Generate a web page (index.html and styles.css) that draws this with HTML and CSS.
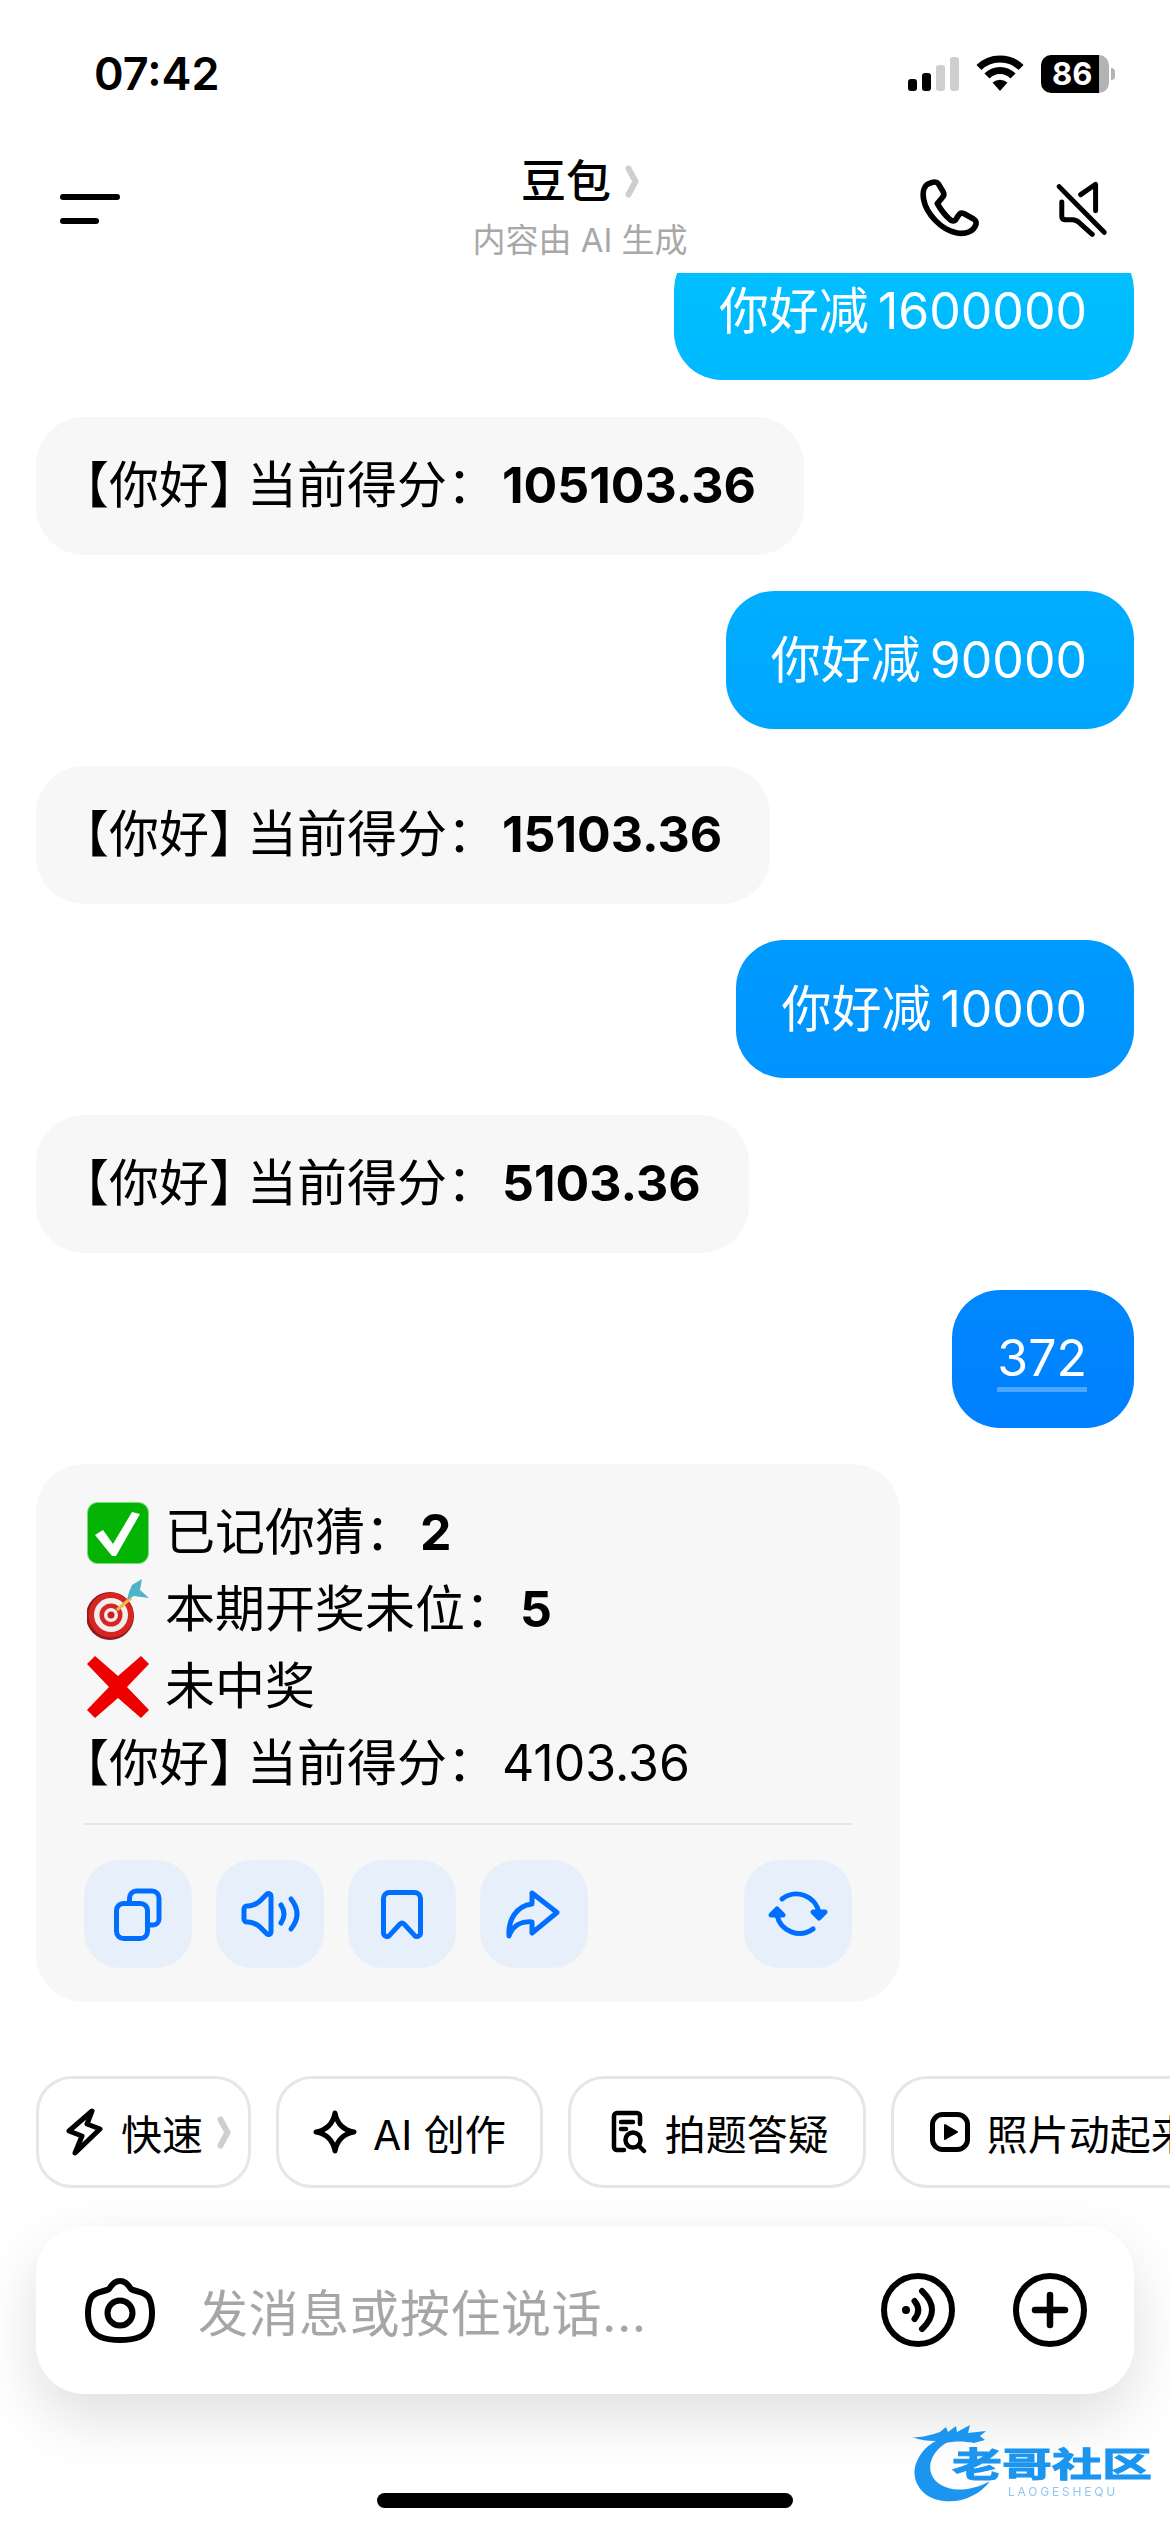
FILE: index.html
```html
<!DOCTYPE html>
<html lang="zh-CN">
<head>
    <meta charset="UTF-8">
    <meta name="viewport" content="width=device-width, initial-scale=1.0">
    <title>豆包</title>
    <link rel="stylesheet" href="styles.css">
</head>
<body>
    <div class="phone">
        <!-- Status bar -->
        <div class="status-bar">
            <span class="time">07:42</span>
            <div class="status-icons">
                <div class="signal">
                    <i class="bar on h1"></i><i class="bar on h2"></i><i class="bar h3"></i><i class="bar h4"></i>
                </div>
                <svg class="wifi" viewBox="0 0 48 36">
                    <path d="M3 12.5C14 1 34 1 45 12.5" fill="none" stroke="#000" stroke-width="7"/>
                    <path d="M11 21C18 13.5 30 13.5 37 21" fill="none" stroke="#000" stroke-width="7"/>
                    <path d="M16.5 27.5Q24 22 31.5 27.5L24 36Z" fill="#000"/>
                </svg>
                <div class="battery">
                    <div class="battery-body">86</div>
                    <i class="battery-nub"></i>
                </div>
            </div>
        </div>

        <!-- Header -->
        <header class="top-bar">
            <div class="menu-btn"><i class="menu-long"></i><i class="menu-short"></i></div>
            <div class="title-block">
                <div class="title">豆包
                    <svg class="chev" viewBox="0 0 14 33"><path d="M3.5 3.5L10.5 16.5L3.5 29.5" fill="none" stroke="#cfcfcf" stroke-width="6" stroke-linecap="round" stroke-linejoin="round"/></svg>
                </div>
                <div class="subtitle">内容由 AI 生成</div>
            </div>
            <div class="top-actions">
                <svg class="phone-icon" viewBox="110 410 190 190">
                    <path d="M145 428C125 432 120 455 124 478C132 520 175 568 222 578C250 584 275 575 282 552C284 545 280 540 272 535L245 520C238 517 232 520 228 527L220 540C215 545 208 543 200 535C185 522 175 507 165 490L178 475C185 468 187 462 183 455L168 430C162 422 155 424 145 428Z" fill="none" stroke="#000" stroke-width="17" stroke-linejoin="round"/>
                </svg>
                <svg class="mute-icon" viewBox="520 412 165 172">
                    <g fill="none" stroke="#000" stroke-width="15" stroke-linecap="round" stroke-linejoin="round">
                        <path d="M532 432L668 570"/>
                        <path d="M597 456L642 425V505"/>
                        <path d="M540 478V522Q540 532 552 532H572Q584 532 594 542L632 576"/>
                    </g>
                </svg>
            </div>
        </header>

        <!-- Chat -->
        <main class="chat">
            <div class="msg-list">
                <div class="bubble me">你好减 1600000</div>
                <div class="bubble bot"><span class="punct">【你好<span class="rb">】</span>当前得分<span class="colon">：</span></span><b>105103.36</b></div>
                <div class="bubble me">你好减 90000</div>
                <div class="bubble bot"><span class="punct">【你好<span class="rb">】</span>当前得分<span class="colon">：</span></span><b>15103.36</b></div>
                <div class="bubble me">你好减 10000</div>
                <div class="bubble bot"><span class="punct">【你好<span class="rb">】</span>当前得分<span class="colon">：</span></span><b>5103.36</b></div>
                <div class="bubble me"><span class="pending">372</span></div>

                <div class="card">
                    <div class="line">
                        <svg class="emoji" viewBox="0 0 62 62">
                            <rect x="0.5" y="0.5" width="61" height="61" rx="10" fill="#04b404" stroke="#7fd97f"/>
                            <polygon points="8,33 16,28 26,42 45,10 53,12 29,54 25,54" fill="#fff"/>
                        </svg>
                        <span>已记你猜<span class="colon">：</span><b>2</b></span>
                    </div>
                    <div class="line">
                        <svg class="emoji" viewBox="0 0 62 62">
                            <circle cx="23" cy="37" r="24" fill="#8f1b1b"/>
                            <circle cx="24" cy="36" r="22.500" fill="#d92424"/>
                            <circle cx="24" cy="36" r="17" fill="#f1eeee"/>
                            <circle cx="24" cy="36" r="11.500" fill="#d92424"/>
                            <circle cx="24" cy="36" r="7" fill="#f1eeee"/>
                            <circle cx="24" cy="36" r="3.500" fill="#c81e1e"/>
                            <path d="M30 31L44 19" stroke="#e9b949" stroke-width="3"/>
                            <path d="M40 21L47 17L62 19L53 11L55 0L45 6L42 13Z" fill="#4fb3c8"/>
                        </svg>
                        <span>本期开奖未位<span class="colon">：</span><b>5</b></span>
                    </div>
                    <div class="line">
                        <svg class="emoji" viewBox="0 0 62 62">
                            <polygon points="0,8 8,0 31,20 54,0 62,8 40,31 62,54 54,62 31,42 8,62 0,54 22,31" fill="#ee0000"/>
                        </svg>
                        <span>未中奖</span>
                    </div>
                    <div class="line"><span><span class="punct">【你好<span class="rb">】</span>当前得分<span class="colon">：</span></span>4103.36</span></div>

                    <div class="card-divider"></div>

                    <div class="card-actions">
                        <button class="act-btn">
                            <svg viewBox="0 0 108 108"><rect x="32.5" y="43.5" width="31" height="35" rx="7"/><path d="M45.5 43V38a7 7 0 0 1 7-7H68a7 7 0 0 1 7 7V59a6 6 0 0 1-6 6H64"/></svg>
                        </button>
                        <button class="act-btn">
                            <svg viewBox="0 0 108 108"><path d="M55 36a2.5 2.5 0 0 0-4-2L44 41Q38 46 32 46H31a3 3 0 0 0-3 3V59a3 3 0 0 0 3 3H32Q38 62 44 67L51 74a2.5 2.5 0 0 0 4-2Z"/><path d="M65 45Q71 54 65 63"/><path d="M75 39Q87 54 75 69"/></svg>
                        </button>
                        <button class="act-btn">
                            <svg viewBox="0 0 108 108"><path d="M35.5 38.5a6 6 0 0 1 6-6H66.500a6 6 0 0 1 6 6V73a3.500 3.500 0 0 1-6 2.400L56 64a3 3 0 0 0-4 0L41.500 75.400a3.500 3.500 0 0 1-6-2.400Z"/></svg>
                        </button>
                        <button class="act-btn">
                            <svg viewBox="0 0 108 108"><path d="M52 33L77 52.500L52 73V62C42 61 33 65 29 76C28 60 36 46 52 44Z"/></svg>
                        </button>
                        <button class="act-btn push-right">
                            <svg viewBox="0 0 108 108"><path d="M38 39A23 23 0 0 1 75 53"/><path d="M69 69A23 23 0 0 1 33 55"/><polygon class="solid" points="69,52 81,52 75,58"/><polygon class="solid" points="27,55 39,55 33,49"/></svg>
                        </button>
                    </div>
                </div>
            </div>
        </main>

        <!-- Quick chips -->
        <div class="chips">
            <div class="chip chip-first">
                <svg class="chip-icon bolt" viewBox="-2 -2 38 50"><path d="M24 2L1 22L14 27L7 44L32 20L19 15Z" fill="none" stroke="#000" stroke-width="5" stroke-linejoin="round"/></svg>
                <span>快速</span>
                <svg class="chev" viewBox="0 0 14 33"><path d="M3.500 3.500L10.500 16.500L3.500 29.500" fill="none" stroke="#cfcfcf" stroke-width="6" stroke-linecap="round" stroke-linejoin="round"/></svg>
            </div>
            <div class="chip">
                <svg class="chip-icon star" viewBox="0 0 44 44"><path d="M22 3C24 14 30 20 41 22C30 24 24 30 22 41C20 30 14 24 3 22C14 20 20 14 22 3Z" fill="none" stroke="#000" stroke-width="5" stroke-linejoin="round"/></svg>
                <span>AI 创作</span>
            </div>
            <div class="chip chip-doc">
                <svg class="chip-icon doc" viewBox="0 0 36 44"><g fill="none" stroke="#000" stroke-width="4.500" stroke-linecap="round"><path d="M13 40H6a3 3 0 0 1-3-3V6a3 3 0 0 1 3-3H26a3 3 0 0 1 3 3V14"/><path d="M10 12H22M10 19H15"/><circle cx="22" cy="30" r="7.500"/><path d="M27.500 35.500L33 41"/></g></svg>
                <span>拍题答疑</span>
            </div>
            <div class="chip chip-play">
                <svg class="chip-icon play" viewBox="0 0 40 40"><rect x="2.500" y="2.500" width="35" height="35" rx="10" fill="none" stroke="#000" stroke-width="5"/><path d="M15 13L27 20L15 27Z" fill="#000" stroke="#000" stroke-width="2" stroke-linejoin="round"/></svg>
                <span>照片动起来</span>
            </div>
        </div>

        <!-- Input bar -->
        <div class="input-bar">
            <svg class="camera" viewBox="0 0 70 65">
                <path d="M24 11C27 6 30 3 35 3C40 3 43 6 46 11C50 14 60 13 64 20C68 28 68 42 64 50C60 60 48 62 35 62C22 62 10 60 6 50C2 42 2 28 6 20C10 13 20 14 24 11Z" fill="none" stroke="#000" stroke-width="6" stroke-linejoin="round"/>
                <circle cx="35" cy="35" r="12.500" fill="none" stroke="#000" stroke-width="6"/>
            </svg>
            <div class="placeholder">发消息或按住说话...</div>
            <svg class="round-icon" viewBox="0 0 74 74">
                <circle cx="37" cy="37" r="34" fill="none" stroke="#000" stroke-width="6"/>
                <circle cx="25" cy="37" r="4" fill="#000"/>
                <path d="M33.500 28Q41 37 33.500 46M41 18Q61 37 41 56" fill="none" stroke="#000" stroke-width="6" stroke-linecap="round"/>
            </svg>
            <svg class="round-icon" viewBox="0 0 74 74">
                <circle cx="37" cy="37" r="34" fill="none" stroke="#000" stroke-width="6"/>
                <path d="M37 22V52M22 37H52" fill="none" stroke="#000" stroke-width="6.500" stroke-linecap="round"/>
            </svg>
        </div>

        <div class="home-area"><i class="home-bar"></i></div>

        <!-- Watermark -->
        <div class="watermark">
            <svg class="wm-dragon" viewBox="0 0 100 80">
                <path d="M2 14C12 15 20 12 30 9L36 4L38 9L46 3L47 9L60 2L58 10L76 8L70 13L75 17L64 20C54 18 44 18 36 20C20 30 14 48 28 60C42 70 62 68 80 58C70 72 52 80 34 78C10 76 -2 54 8 36C12 28 18 22 26 18C18 18 10 17 2 14Z" fill="#1b95f0"/>
            </svg>
            <span class="wm-name">老哥社区</span>
            <span class="wm-sub">LAOGESHEQU</span>
        </div>
    </div>
</body>
</html>
```

FILE: styles.css
```css
* {
    margin: 0;
    padding: 0;
    box-sizing: border-box;
}

body {
    background-color: #fff;
    font-family: "Inter", "Noto Sans CJK SC", sans-serif;
    color: #000;
}

.phone {
    position: relative;
    width: 1170px;
    height: 2532px;
    overflow: hidden;
    display: flex;
    flex-direction: column;
    background-color: #fff;
}

/* Status bar */
.status-bar {
    height: 100px;
    padding: 55px 55px 0 94px;
    display: flex;
    justify-content: space-between;
    align-items: flex-start;
}

.time {
    font-size: 45px;
    font-weight: 600;
    line-height: 38px;
}

.status-icons {
    display: flex;
    align-items: flex-start;
}

.signal {
    display: flex;
    align-items: flex-end;
    gap: 5px;
    height: 36px;
    margin-right: 17px;
}

.bar {
    width: 9px;
    border-radius: 3px;
    background-color: #cfcfcf;
}

.bar.on {
    background-color: #000;
}

.h1 { height: 12px; }
.h2 { height: 18px; }
.h3 { height: 26px; }
.h4 { height: 34px; }

.wifi {
    width: 48px;
    height: 36px;
    margin-right: 17px;
}

.battery {
    display: flex;
    align-items: center;
}

.battery-body {
    width: 68px;
    height: 38px;
    border-radius: 10px;
    background: linear-gradient(90deg, #000 85%, #b3b3b3 85%);
    color: #fff;
    font-size: 31px;
    font-weight: 700;
    line-height: 38px;
    padding-left: 11px;
}

.battery-nub {
    width: 4px;
    height: 12px;
    margin-left: 2px;
    border-radius: 0 6px 6px 0;
    background-color: #b3b3b3;
}

/* Header */
.top-bar {
    height: 173px;
    padding: 44px 70px 0 60px;
    display: grid;
    grid-template-columns: 1fr auto 1fr;
    align-items: center;
}

.menu-btn i {
    display: block;
    height: 6px;
    border-radius: 3px;
    background-color: #000;
}

.menu-long {
    width: 60px;
    margin-bottom: 18px;
}

.menu-short {
    width: 39px;
}

.title-block {
    margin-top: -4px;
    text-align: center;
}

.title {
    font-size: 45px;
    font-weight: 500;
    line-height: 56px;
    display: flex;
    justify-content: center;
    align-items: center;
    gap: 14px;
}

.chev {
    width: 14px;
    height: 33px;
}

.subtitle {
    margin-top: 10px;
    font-size: 33px;
    line-height: 40px;
    color: #a8a8a8;
}

.top-actions {
    display: flex;
    justify-content: flex-end;
    align-items: center;
    gap: 73px;
    margin-right: -10px;
}

.phone-icon {
    width: 63px;
    height: 63px;
}

.mute-icon {
    width: 55px;
    height: 57px;
}

/* Chat */
.chat {
    height: 1803px;
    overflow: hidden;
}

.msg-list {
    margin-top: -31px;
    padding: 0 36px;
    display: flex;
    flex-direction: column;
    gap: 36.600px;
}

.bubble {
    padding: 30.500px 48px;
    border-radius: 48px;
    font-size: 50px;
    line-height: 77px;
    white-space: nowrap;
}

.bubble.me {
    align-self: flex-end;
    padding: 30.500px 47px 30.500px 45px;
    color: #fff;
    word-spacing: -5px;
    background: linear-gradient(180deg, #00bfff 273px, #0080ff 1427px) fixed;
}

.bubble.bot {
    align-self: flex-start;
    background-color: #f7f7f7;
}

b {
    font-weight: 700;
}

/* opening bracket sits half an em to the left, closing one a little tight */
.punct {
    text-spacing-trim: trim-start;
}

.rb {
    letter-spacing: -12px;
}

.colon {
    letter-spacing: 5px;
}

.pending {
    display: inline-block;
    height: 72px;
    line-height: 77px;
    border-bottom: 5px solid rgba(255, 255, 255, 0.3);
}

.card {
    align-self: flex-start;
    width: 864px;
    height: 538px;
    padding: 30px 48px;
    border-radius: 48px;
    background-color: #f7f7f7;
    font-size: 50px;
}

.line {
    display: flex;
    align-items: center;
    height: 77px;
    line-height: 77px;
    white-space: nowrap;
}

.emoji {
    width: 62px;
    height: 62px;
    margin: 0 16px 0 3px;
    flex-shrink: 0;
}

.card-divider {
    height: 2px;
    margin: 21px 0 35px;
    background-color: #e6e6e6;
}

.card-actions {
    display: flex;
    gap: 24px;
}

.act-btn {
    width: 108px;
    height: 108px;
    border: none;
    border-radius: 36px;
    background-color: #e7f0fa;
}

.act-btn svg {
    display: block;
    width: 108px;
    height: 108px;
    fill: none;
    stroke: #006fff;
    stroke-width: 5;
    stroke-linecap: round;
    stroke-linejoin: round;
}

.act-btn .solid {
    fill: #006fff;
}

.push-right {
    margin-left: auto;
}

/* Chips */
.chips {
    height: 112px;
    padding-left: 36px;
    display: flex;
    gap: 25px;
}

.chip {
    height: 112px;
    padding: 0 34px;
    display: flex;
    align-items: center;
    flex-shrink: 0;
    gap: 16px;
    border: 3px solid #e6e6e6;
    border-radius: 36px;
    font-size: 41px;
    white-space: nowrap;
}

.chip-first {
    padding: 0 17px 0 27px;
    gap: 17px;
}

.chip-first .chev {
    margin-left: -3px;
}

.chip-doc {
    padding: 0 34px 0 40px;
    gap: 18px;
}

.chip-play {
    padding: 0 37px 0 36px;
    gap: 17px;
}

.bolt {
    width: 38px;
    height: 50px;
}

.star {
    width: 44px;
    height: 44px;
}

.doc {
    width: 36px;
    height: 44px;
}

.play {
    width: 40px;
    height: 40px;
}

/* Input bar */
.input-bar {
    height: 168px;
    margin: 38px 36px 0;
    padding: 0 47px 0 49px;
    display: flex;
    align-items: center;
    border-radius: 48px;
    background-color: #fff;
    box-shadow: 0 24px 60px rgba(0, 0, 0, 0.13);
}

.camera {
    width: 70px;
    height: 65px;
    margin-right: 43px;
}

.placeholder {
    flex: 1;
    font-size: 50px;
    letter-spacing: 0.500px;
    color: #a6a6a6;
}

.round-icon {
    width: 74px;
    height: 74px;
    margin-left: 58px;
}

/* Home indicator */
.home-area {
    padding-top: 99px;
    display: flex;
    justify-content: center;
}

.home-bar {
    width: 416px;
    height: 15px;
    border-radius: 8px;
    background-color: #000;
}

/* Watermark over the corner */
.watermark {
    position: absolute;
    left: 910px;
    top: 2423px;
    width: 240px;
    height: 80px;
    filter: blur(0.6px);
}

.wm-dragon {
    position: absolute;
    left: 0;
    top: 0;
    width: 100px;
    height: 80px;
}

.wm-name {
    position: absolute;
    left: 42px;
    top: 12px;
    font-size: 50px;
    font-weight: 700;
    line-height: 60px;
    white-space: nowrap;
    color: #1b95f0;
    -webkit-text-stroke: 1.500px #1b95f0;
    transform: scaleY(0.68);
}

.wm-sub {
    position: absolute;
    left: 98px;
    top: 63px;
    font-size: 12px;
    line-height: 12px;
    letter-spacing: 2.800px;
    color: #8fc6ee;
}
```
